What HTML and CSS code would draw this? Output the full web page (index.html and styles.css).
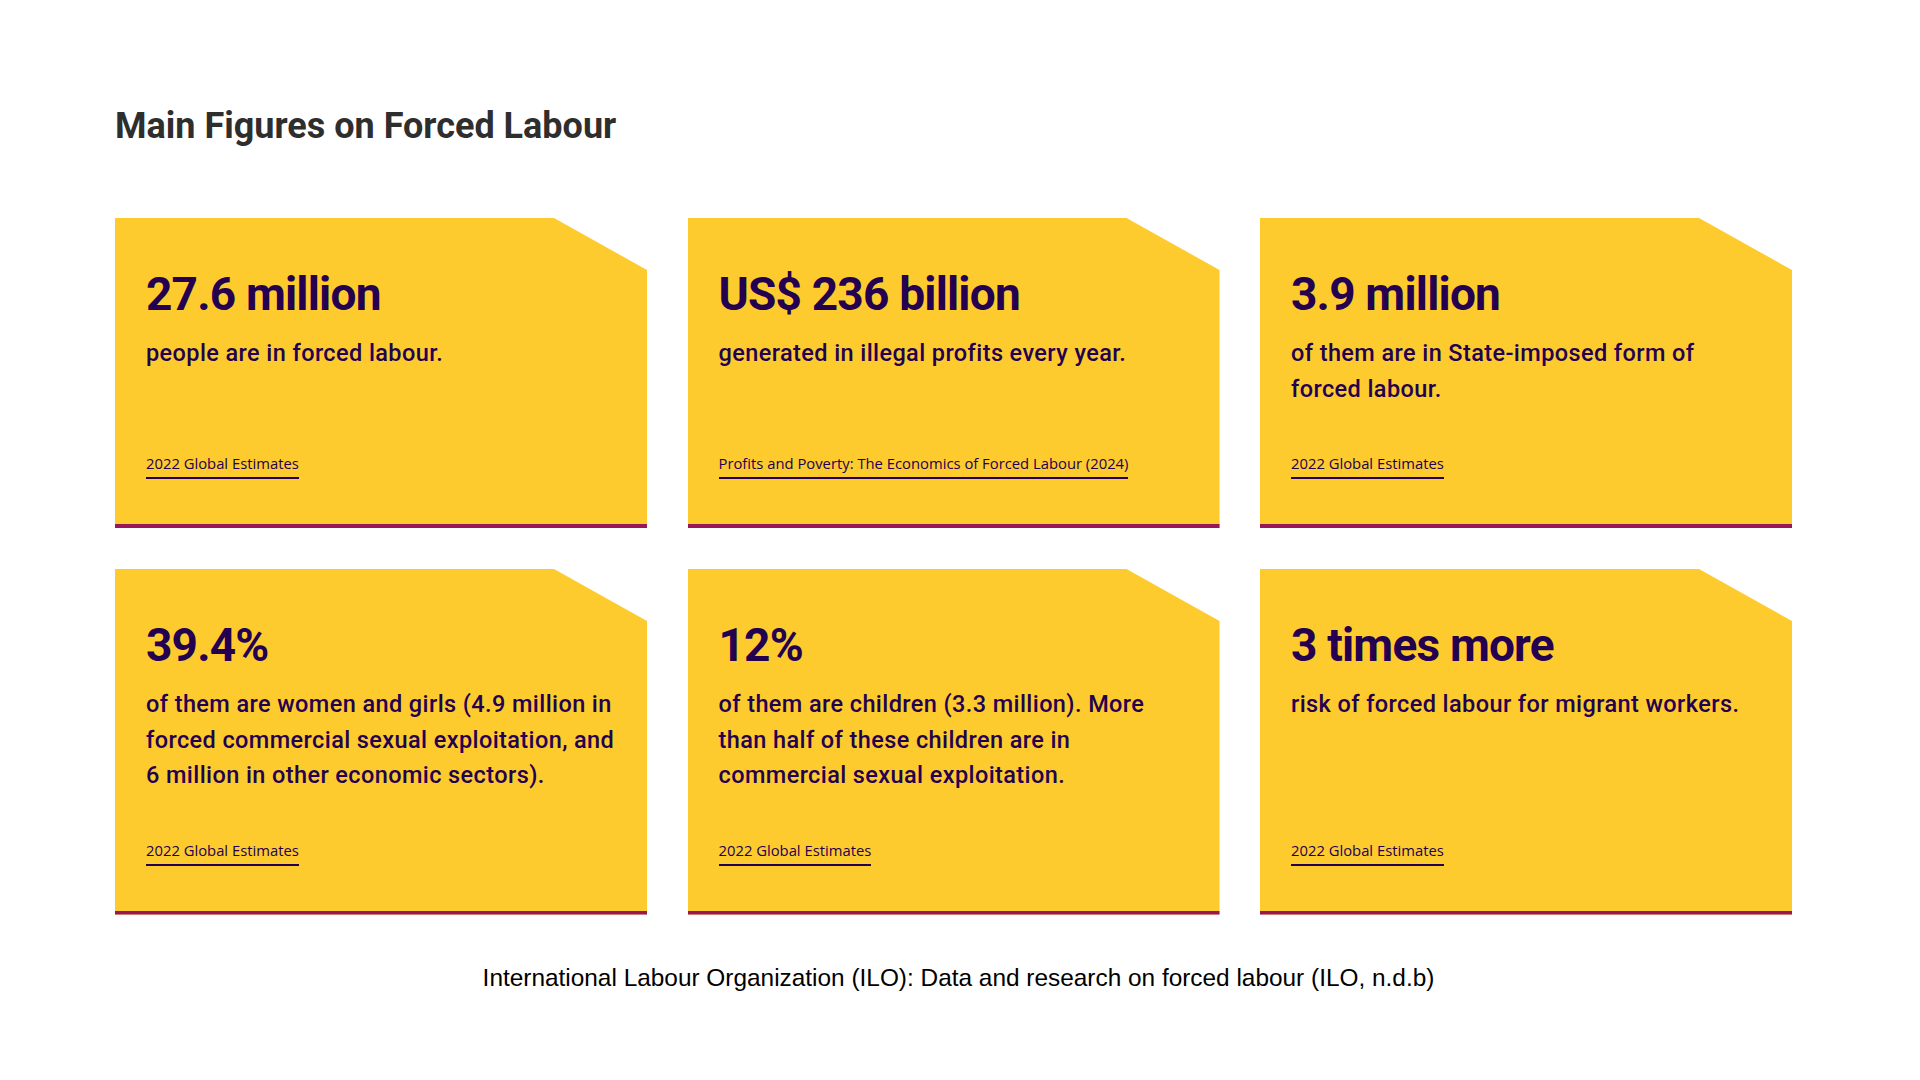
FILE: index.html
```html
<!DOCTYPE html>
<html lang="en">
<head>
<meta charset="utf-8">
<title>Main Figures on Forced Labour</title>
<link rel="stylesheet" href="styles.css">
</head>
<body>
<main class="page">
  <h1 class="title">Main Figures on Forced Labour</h1>
  <section class="grid">
    <article class="card">
      <h2 class="figure">27.6 million</h2>
      <p class="desc">people are in forced labour.</p>
      <div class="source"><a href="#" class="link">2022 Global Estimates</a></div>
    </article>
    <article class="card">
      <h2 class="figure">US$ 236 billion</h2>
      <p class="desc">generated in illegal profits every year.</p>
      <div class="source"><a href="#" class="link">Profits and Poverty: The Economics of Forced Labour (2024)</a></div>
    </article>
    <article class="card">
      <h2 class="figure">3.9 million</h2>
      <p class="desc">of them are in State-imposed form of<br>forced labour.</p>
      <div class="source"><a href="#" class="link">2022 Global Estimates</a></div>
    </article>
    <article class="card">
      <h2 class="figure">39.4%</h2>
      <p class="desc">of them are women and girls (4.9 million in<br>forced commercial sexual exploitation, and<br>6 million in other economic sectors).</p>
      <div class="source"><a href="#" class="link">2022 Global Estimates</a></div>
    </article>
    <article class="card">
      <h2 class="figure">12%</h2>
      <p class="desc">of them are children (3.3 million). More<br>than half of these children are in<br>commercial sexual exploitation.</p>
      <div class="source"><a href="#" class="link">2022 Global Estimates</a></div>
    </article>
    <article class="card">
      <h2 class="figure">3 times more</h2>
      <p class="desc">risk of forced labour for migrant workers.</p>
      <div class="source"><a href="#" class="link">2022 Global Estimates</a></div>
    </article>
  </section>
  <p class="credit">International Labour Organization (ILO): Data and research on forced labour (ILO, n.d.b)</p>
</main>
</body>
</html>
```

FILE: styles.css
```css
* { box-sizing: border-box; }

html, body {
  margin: 0;
  padding: 0;
  background: #ffffff;
}

body {
  width: 1920px;
  height: 1080px;
  overflow: hidden;
  font-family: Roboto, "Liberation Sans", sans-serif;
}

.page {
  padding: 105px 128px 0 115px;
}

.title {
  margin: 0;
  font-family: Roboto, "Liberation Sans", sans-serif;
  font-weight: 700;
  font-size: 36px;
  line-height: 42px;
  letter-spacing: 0;
  color: #2e2e2e;
}

.grid {
  margin-top: 71px;
  display: grid;
  grid-template-columns: repeat(3, 532px);
  column-gap: 40.5px;
  row-gap: 41px;
}

.card {
  display: flex;
  flex-direction: column;
  background: #fecb2f;
  border-bottom: 4px solid #9a1656;
  padding: 49px 30px 45px 31px;
  clip-path: polygon(0 0, calc(100% - 93px) 0, 100% 52px, 100% 100%, 0 100%);
  color: #230050;
}

.figure {
  margin: 0;
  font-family: Roboto, "Liberation Sans", sans-serif;
  font-weight: 700;
  font-size: 46px;
  line-height: 55px;
  letter-spacing: -0.8px;
}

.desc {
  margin: 14px 0 46px 0;
  font-family: Roboto, "Liberation Sans", sans-serif;
  font-weight: 500;
  font-size: 23.5px;
  line-height: 35.5px;
  letter-spacing: 0.4px;
  white-space: nowrap;
}

.source {
  margin-top: auto;
}

.link {
  display: inline-block;
  font-family: "Open Sans", "Liberation Sans", sans-serif;
  font-size: 14.8px;
  line-height: 20px;
  color: #230050;
  text-decoration: none;
  padding-bottom: 4px;
  border-bottom: 2px solid #230050;
}

.credit {
  margin: 49px 0 0 0;
  font-family: "Liberation Sans", Arial, sans-serif;
  font-size: 24.4px;
  line-height: 28px;
  color: #000000;
  text-align: center;
  padding-left: 10px;
}
```
